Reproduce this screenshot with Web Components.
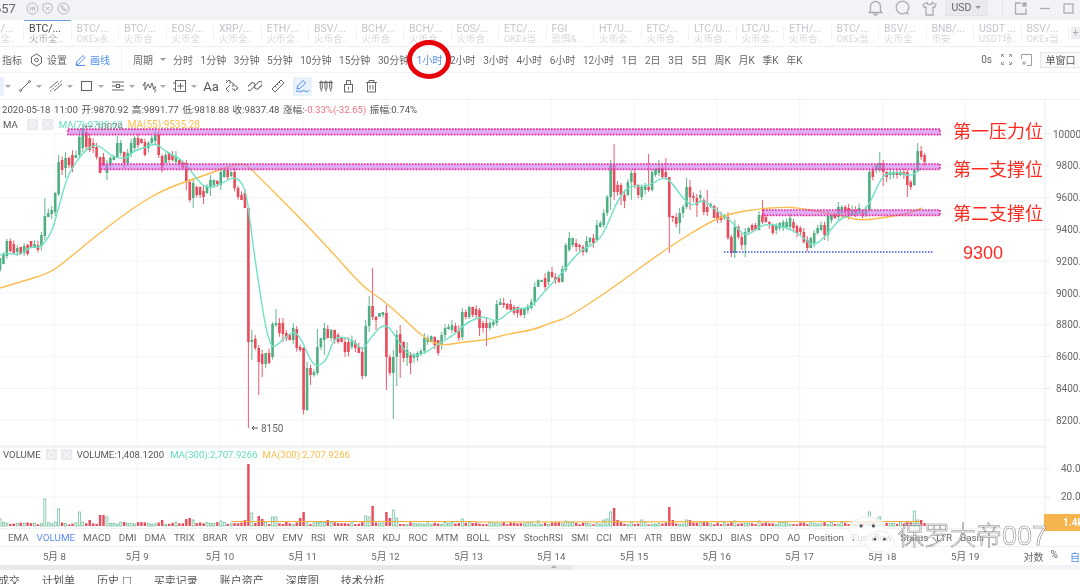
<!DOCTYPE html>
<html lang="zh">
<head>
<meta charset="utf-8">
<title>K线</title>
<style>
	html, body { margin: 0; background: #fff; }
	body {
		position: relative;
		width: 1080px;
		height: 584px;
		overflow: hidden;
		font-family: Roboto, "Noto Sans CJK SC", sans-serif;
		font-size: 10px;
		color: #666;
		filter: blur(.35px);
	}
</style>
</head>
<body>
<top-bar></top-bar>

<symbol-tabs>
	<symbol-tab sub="火币全..">BTC/...</symbol-tab>
	<symbol-tab sub="火币全.." active>BTC/...</symbol-tab>
	<symbol-tab sub="OKEx永..">BTC/...</symbol-tab>
	<symbol-tab sub="火币合..">BTC/...</symbol-tab>
	<symbol-tab sub="火币全..">EOS/...</symbol-tab>
	<symbol-tab sub="火币全..">XRP/...</symbol-tab>
	<symbol-tab sub="火币全..">ETH/...</symbol-tab>
	<symbol-tab sub="火币合..">BSV/...</symbol-tab>
	<symbol-tab sub="火币合..">BCH/...</symbol-tab>
	<symbol-tab sub="火币合..">BCH/...</symbol-tab>
	<symbol-tab sub="火币合..">EOS/...</symbol-tab>
	<symbol-tab sub="OKEx当..">ETC/...</symbol-tab>
	<symbol-tab sub="恐惧&..">FGI</symbol-tab>
	<symbol-tab sub="火币全..">HT/U...</symbol-tab>
	<symbol-tab sub="火币合..">ETC/...</symbol-tab>
	<symbol-tab sub="火币合..">LTC/U...</symbol-tab>
	<symbol-tab sub="火币全..">LTC/U...</symbol-tab>
	<symbol-tab sub="火币合..">ETH/...</symbol-tab>
	<symbol-tab sub="OKEx当..">BTC/...</symbol-tab>
	<symbol-tab sub="火币全..">BSV/...</symbol-tab>
	<symbol-tab sub="币安">BNB/...</symbol-tab>
	<symbol-tab sub="USDT场..">USDT ...</symbol-tab>
	<symbol-tab sub="OKEx当..">BSV/...</symbol-tab>
</symbol-tabs>

<period-bar>
	<period-btn>分时</period-btn>
	<period-btn>1分钟</period-btn>
	<period-btn>3分钟</period-btn>
	<period-btn>5分钟</period-btn>
	<period-btn>10分钟</period-btn>
	<period-btn>15分钟</period-btn>
	<period-btn>30分钟</period-btn>
	<period-btn active ringed>1小时</period-btn>
	<period-btn>2小时</period-btn>
	<period-btn>3小时</period-btn>
	<period-btn>4小时</period-btn>
	<period-btn>6小时</period-btn>
	<period-btn>12小时</period-btn>
	<period-btn>1日</period-btn>
	<period-btn>2日</period-btn>
	<period-btn>3日</period-btn>
	<period-btn>5日</period-btn>
	<period-btn>周K</period-btn>
	<period-btn>月K</period-btn>
	<period-btn>季K</period-btn>
	<period-btn>年K</period-btn>
</period-bar>

<draw-tools></draw-tools>

<kline-chart></kline-chart>

<indicator-row>
	<span>EMA</span><span class="on">VOLUME</span><span>MACD</span><span>DMI</span><span>DMA</span><span>TRIX</span><span>BRAR</span><span>VR</span><span>OBV</span><span>EMV</span><span>RSI</span><span>WR</span><span>SAR</span><span>KDJ</span><span>ROC</span><span>MTM</span><span>BOLL</span><span>PSY</span><span>StochRSI</span><span>SMI</span><span>CCI</span><span>MFI</span><span>ATR</span><span>BBW</span><span>SKDJ</span><span>BIAS</span><span>DPO</span><span>AO</span><span>Position</span><span>Fundflow</span><span>Status</span><span>LTR</span><span>Basis</span>
</indicator-row>

<date-row></date-row>
<scroll-strip></scroll-strip>

<bottom-tabs>
	<span>成交</span><span>计划单</span><span>历史 ☐</span><span>买卖记录</span><span>账户资产</span><span>深度图</span><span>技术分析</span>
</bottom-tabs>

<water-mark></water-mark>

<script>
class TopBar extends HTMLElement {
	constructor() {
		super();
		this.attachShadow({ mode: 'open' }).innerHTML = `
			<style>
				:host { display: flex; align-items: center; height: 20px; background: #f2f3f6; color: #666; box-sizing: border-box; padding-bottom: 4px; }
				.num { font-size: 13px; margin-left: -6px; margin-right: 8px; color: #666; }
				.left { display: flex; align-items: center; gap: 2px; }
				.right { display: flex; align-items: center; margin-left: auto; }
				svg { display: block; fill: none; stroke: #b4b7bd; stroke-width: 1; }
				.big { stroke: #a9adb4; stroke-width: 1.3; margin-right: 12px; }
				.usd { display: flex; align-items: center; justify-content: center; gap: 4px; box-sizing: border-box; width: 43px; height: 16px; margin: 0 14px 0 8px; background: #e8eaee; border-bottom: 1px solid #e0e3e8; color: #666; font-size: 10.5px; }
				.usd i { border: 3px solid transparent; border-top: 3.5px solid #999; border-bottom: 0; }
				.sep { width: 1px; height: 14px; background: #e4e6ea; margin-right: 11px; }
				.win { margin-right: 12px; }
			</style>
			<span class="left">
				<span class="num">657</span>
				<svg width="13" height="13" viewBox="0 0 13 13"><circle cx="6.5" cy="6.5" r="5.5"/><path d="M4.5 4.8v3.4M6.5 4.8v3.4M8.5 4.8v3.4" stroke-width="1.2"/></svg>
				<svg width="13" height="13" viewBox="0 0 13 13"><path d="M6.5 1l4.5 1.6v4c0 2.5-2 4.2-4.5 5.2C4 10.8 2 9.1 2 6.6v-4z"/><path d="M4.8 4.8l3.4 3.4M8.2 4.8l-3.4 3.4"/></svg>
				<svg width="13" height="13" viewBox="0 0 13 13" style="margin-left:1px"><circle cx="6.5" cy="6.5" r="5.5"/><path d="M4.3 3.8c-.5 2.5 2.2 5.2 4.6 4.7l.3-1-1.5-.7-.7.6c-.7-.4-1.2-1-1.5-1.7l.7-.6-.7-1.5z"/></svg>
			</span>
			<span class="right">
				<svg class="big" width="15" height="16" viewBox="0 0 15 16"><path d="M2.5 11V6.5a5 5 0 0 1 10 0V11l1.3 1.5H1.2zM5.5 12.5a2 2.5 0 0 0 4 0"/></svg>
				<svg class="big" width="15" height="16" viewBox="0 0 15 16"><circle cx="7.5" cy="7.5" r="6.3"/><path d="M11.5 12.5l2 2"/></svg>
				<svg class="big" style="margin-right:0" width="15" height="15" viewBox="0 0 15 15"><path d="M4.8 1.5L1 3.5l1.4 3 1.6-.6V14h7V5.9l1.6.6L14 3.5l-3.8-2c-.4 1.5-1.5 2.2-2.7 2.2S5.2 3 4.8 1.5z"/></svg>
				<span class="usd">USD<i></i></span>
				<span class="sep"></span>
				<svg class="big win" width="13" height="13" viewBox="0 0 13 13"><path d="M7 1H1.5v11H12V6.5"/><rect x="9" y="1" width="3" height="3" fill="#a9adb4"/></svg>
				<svg class="big win" style="stroke:#a9adb4" width="12" height="13" viewBox="0 0 12 13"><path d="M1 6.5h10"/></svg>
				<svg class="big win" style="margin-right:6px" width="11" height="11" viewBox="0 0 11 11"><rect x="1" y="1" width="9" height="9"/></svg>
			</span>
		`;
	}
}
customElements.define('top-bar', TopBar);

class SymbolTabs extends HTMLElement {
	constructor() {
		super();
		this.attachShadow({ mode: 'open' }).innerHTML = `
			<style>
				:host { display: flex; position: relative; height: 27px; box-sizing: border-box; border-bottom: 1px solid #f0f1f4; background: #fff; overflow: hidden; }
				.list { display: flex; margin-left: -23.5px; flex: none; }
				.add { position: absolute; right: 0; top: 7px; width: 9px; height: 12px; background: #eceef1; color: #aaa; font-size: 10px; line-height: 12px; text-align: center; }
			</style>
			<div class="list"><slot></slot></div>
			<span class="add">+</span>
		`;
	}
}
customElements.define('symbol-tabs', SymbolTabs);

class SymbolTab extends HTMLElement {
	constructor() {
		super();
		this.attachShadow({ mode: 'open' }).innerHTML = `
			<style>
				:host { display: block; position: relative; flex: none; box-sizing: border-box; width: 47.5px; height: 27px; padding: 3px 0 0 5px; white-space: nowrap; overflow: hidden; color: #c3c6cb; font-size: 10.5px; line-height: 11px; }
				:host::after { content: ""; position: absolute; right: 0; top: 6px; height: 14px; width: 1px; background: #f1f2f4; }
				:host([active]) { color: #444; }
				.sub { display: block; font-size: 9.5px; line-height: 9.5px; color: #d6d8dc; }
				:host([active]) .sub { color: #b0b2b6; }
				:host([active])::before { content: ""; position: absolute; left: 0; top: 0; width: 47px; height: 1px; background: #6d9ff0; }
			</style>
			<slot></slot><span class="sub"></span>
		`;
	}
	connectedCallback() {
		this.shadowRoot.querySelector('.sub').textContent = this.getAttribute('sub');
	}
}
customElements.define('symbol-tab', SymbolTab);

class PeriodBar extends HTMLElement {
	constructor() {
		super();
		this.attachShadow({ mode: 'open' }).innerHTML = `
			<style>
				:host { display: flex; align-items: center; height: 26px; background: #fff; color: #666; box-sizing: border-box; padding-left: 2px; border-bottom: 1px solid #f3f4f6; }
				svg { display: block; fill: none; flex: none; }
				.set { display: flex; align-items: center; padding-right: 11px; margin-right: 11px; height: 100%; border-right: 1px solid #f1f2f4; }
				.caret { width: 0; height: 0; border: 3px solid transparent; border-top: 3.5px solid #999; border-bottom: 0; margin: 0 7px 0 7px; }
				.items { display: flex; align-items: center; gap: 7.6px; }
				.right { display: flex; align-items: center; margin-left: auto; }
				.btn { box-sizing: border-box; width: 40px; height: 16px; line-height: 15px; border: 1px solid #e5e7ea; border-right: 0; background: #f8f9fa; text-align: center; color: #555; margin-left: 8px; }
				.blue { color: #4a8cf0; }
			</style>
			<span class="set">
				<span>指标</span>
				<svg style="margin:0 4px 0 8px" width="13" height="14" viewBox="0 0 13 14" stroke="#666"><path d="M6.5 1l5 3v6l-5 3-5-3V4z"/><circle cx="6.5" cy="7" r="1.8"/></svg>
				<span>设置</span>
				<svg style="margin:0 4px 0 8px" width="11" height="12" viewBox="0 0 11 12" stroke="#4a8cf0"><path d="M1 11l.7-3L8 1.5 10 3.5 3.6 10zM1 11.500h9"/></svg>
				<span class="blue">画线</span>
			</span>
			<span>周期</span><span class="caret"></span>
			<span class="items"><slot></slot></span>
			<span class="right">
				<span>0s</span>
				<svg style="margin-left:9px" width="11" height="11" viewBox="0 0 11 11" stroke="#9a9da3"><path d="M.5 3V.5H3M8 .5h2.5V3M10.5 8v2.5H8M3 10.5H.5V8M1 1l2 2M10 1L8 3M10 10L8 8M1 10l2-2"/></svg>
				<svg style="margin-left:9px" width="11" height="12" viewBox="0 0 11 12" stroke="#9a9da3"><path d="M.5 5V.5h10v11H6M1 9h4M3 7v4"/></svg>
				<span class="btn">单窗口</span>
			</span>
		`;
	}
}
customElements.define('period-bar', PeriodBar);

class PeriodBtn extends HTMLElement {
	constructor() {
		super();
		this.attachShadow({ mode: 'open' }).innerHTML = `
			<style>
				:host { display: block; position: relative; white-space: nowrap; color: #666; }
				:host([active]) { color: #5b8def; }
				.ring { display: none; position: absolute; left: 50%; top: 50%; width: 34px; height: 29px; margin: -20px 0 0 -22.5px; border: 5.5px solid #e8000b; border-radius: 50%; z-index: 2; }
				:host([ringed]) .ring { display: block; }
			</style>
			<slot></slot><span class="ring"></span>
		`;
	}
}
customElements.define('period-btn', PeriodBtn);

class DrawTools extends HTMLElement {
	constructor() {
		super();
		const group = (icon) => `<span class="group"><span class="ic">${icon}</span><i></i></span>`;
		const cell = (icon, cls) => `<span class="cell ${cls || ''}">${icon}</span>`;
		this.attachShadow({ mode: 'open' }).innerHTML = `
			<style>
				:host { display: flex; align-items: center; height: 27px; box-sizing: border-box; margin-left: -16px; border-bottom: 1px solid #f0f1f4; background: #fff; color: #555; }
				svg { display: block; fill: none; stroke: #666; stroke-width: 1; }
				.group { display: flex; align-items: center; width: 31px; flex: none; }
				.ic { display: flex; justify-content: center; width: 20px; }
				i { border: 3px solid transparent; border-top: 3.5px solid #aaa; border-bottom: 0; margin-left: 1px; }
				.cell { display: flex; align-items: center; justify-content: center; width: 22.8px; height: 19px; flex: none; }
				.aa { font-size: 13px; color: #555; width: 20px; }
				.on { background: #e8f2fd; width: 19px; margin: 0 2px 0 4px; }
				.on svg { stroke: #4a8cf0; }
				.first { background: linear-gradient(90deg, #e8f2fd 20px, transparent 20px); height: 19px; }
			</style>
			<span class="group first"><span class="ic"><svg width="14" height="14" viewBox="0 0 14 14"><path d="M2 12L12 2" stroke="#4a8cf0"/></svg></span><i></i></span>
			${group('<svg width="14" height="14" viewBox="0 0 14 14"><path d="M3 11l8-8"/><circle cx="2.5" cy="11.5" r="1"/><circle cx="11.5" cy="2.5" r="1"/></svg>')}
			${group('<svg width="14" height="14" viewBox="0 0 14 14"><path d="M1 9l8-7M5 12l8-7"/><path d="M1 12.5L13 1.5" stroke-dasharray="2 1.5"/></svg>')}
			${group('<svg width="14" height="14" viewBox="0 0 14 14"><rect x="1.5" y="2.5" width="10" height="9" stroke-width="1.1"/></svg>')}
			${group('<svg width="14" height="14" viewBox="0 0 14 14"><path d="M1 3h12M1 11h12M1 7h4M9 7h4"/><rect x="5.5" y="5.5" width="3" height="3"/></svg>')}
			${group('<svg width="15" height="14" viewBox="0 0 15 14"><path d="M1 7l2-4v8M3 11l3-6 2 4 2-5 2 7M12 8h2l-1.5 2 1.5 1.5L12 13"/></svg>')}
			${group('<svg width="14" height="14" viewBox="0 0 14 14"><rect x="2.5" y="1.5" width="10" height="11"/><path d="M7.5 4v6M4.5 7h6M0 4h2.5M0 10h2.5"/></svg>')}
			${cell('Aa', 'aa')}
			${cell('<svg width="14" height="14" viewBox="0 0 14 14"><path d="M1 4l3-3 9 8-3 3-3-2.5M4 13l-3-3 4-4M5 2v3M8 5v3"/><path d="M1 1.5h4M9 10h4" stroke-dasharray="1 1"/></svg>')}
			${cell('<svg width="14" height="14" viewBox="0 0 14 14"><rect x="-1.5" y="5.3" width="9" height="4.5" rx="2.2" transform="rotate(-45 3 7.5)"/><rect x="6" y="4" width="9" height="4.5" rx="2.2" transform="rotate(-45 10.5 6.2)"/></svg>')}
			${cell('<svg width="14" height="14" viewBox="0 0 14 14"><path d="M1 10L10 1l3 3-9 9zM4 7l1.5 1.5M6 5l1.5 1.5M8 3l1.5 1.5"/></svg>')}
			${cell('<svg width="15" height="14" viewBox="0 0 15 14"><path d="M2 10l.5-3L8 1.5 10.5 4 5 9.5zM1 12.5c2-1.5 3 .8 5 0s2.5-1.5 4-.5 2 .8 4-.5"/></svg>', 'on')}
			${cell('<svg width="14" height="14" viewBox="0 0 14 14"><path d="M0 3.5h14"/><rect x="1.3" y="2" width="2" height="8" rx="1"/><rect x="6" y="2" width="2" height="8" rx="1"/><rect x="10.7" y="2" width="2" height="8" rx="1"/><path d="M2.3 10v2.5M7 10v2.5M11.7 10v2.5"/></svg>')}
			${cell('<svg width="13" height="14" viewBox="0 0 13 14"><rect x="2.5" y="5.5" width="8" height="7.5"/><path d="M4.5 5.5V1.5h4v4M6.5 8v2.5"/></svg>')}
			${cell('<svg width="13" height="14" viewBox="0 0 13 14"><path d="M1 3.5h11M4 3.5V1.5h5v2M2.5 3.5V13h8V3.5M5 6v4.5M8 6v4.5"/></svg>')}
		`;
	}
}
customElements.define('draw-tools', DrawTools);

/* candles are read off the picture: top and bottom of the body in page pixels, g or r */
const CANDLES = `g258,270 g254,264 g241,256 r241,251 r244,253 g248,252 r247,254 g246,253 r245,254 r241,247 g244,248 r245,250
g235,246 g216,236 g213,217 g210,214 g193,212 g162,194 r160,170 g158,168 r158,165 r155,168 g155,158 g137,155 g128,148 r132,147 r138,150 r143,148
r147,157 r157,173 r157,166 g165,173 g158,165 g157,160 g143,157 g143,153 r152,163 g153,163 g143,154 g138,148 r138,145 r139,143 r142,155 g143,148
g138,143 g135,141 r135,155 r156,168 g155,163 r153,160 r155,160 g156,162 r160,164 r162,168 r163,182 r182,200 g183,198 r187,195 r187,195 r191,197
g187,193 g180,188 g180,185 r181,184 g172,185 g170,177 r170,177 g172,176 r172,188 r188,197 r195,200 r193,208 r208,342 g340,342 r339,348 r348,362
r354,364 g353,364 r353,363 g324,357 g323,325 r323,333 r323,334 r333,338 r335,340 g328,340 r329,348 r347,350 r348,410 g368,410 r368,375 g372,375
g347,373 g338,347 g328,340 r329,338 g330,338 r330,340 r335,342 r338,342 r342,352 r342,352 g340,347 r343,348 r347,353 r352,376 g326,376 g306,326
r306,317 r317,320 g313,317 g312,315 r313,357 r357,373 g357,373 g335,357 r334,353 r342,358 g350,358 r355,363 g355,358 g353,357 g351,354 g338,351
g338,342 g336,342 r337,345 r340,353 g335,345 g328,335 g327,329 g325,330 r326,332 r330,338 g312,337 r312,317 g307,317 r307,315 r309,315 r310,328
r323,328 r323,328 g323,328 g322,325 g304,323 g302,305 r303,305 r304,309 r304,310 r307,313 r307,313 r308,315 g308,315 g306,310 g302,308 g287,302
g280,287 g280,282 r278,287 g272,282 r272,277 r277,280 r278,282 g269,282 g245,270 g238,250 g238,245 r243,247 r245,247 r247,252 g241,252 g238,242
r238,243 g225,240 g223,227 g213,225 g197,213 g165,197 r165,192 r185,192 r185,195 r195,201 g182,195 g173,182 r173,185 r185,195 g187,197 g186,190
r187,190 g172,190 g170,175 g168,173 r168,177 r172,177 r177,217 r216,218 r217,224 g213,223 g207,213 g187,207 r187,197 r196,198 r198,205 g195,198
r200,212 r207,212 g204,207 r206,218 r212,220 r216,220 g215,218 r217,238 r237,253 g227,253 r227,237 r237,245 g232,245 g228,232 r225,230 r225,230
g215,230 r215,222 r217,222 r222,225 r225,233 g225,230 g223,228 g222,228 g222,227 g218,227 r222,228 r226,233 r228,232 r232,242 r240,248 g238,248
g233,243 g228,233 g225,230 r225,235 g216,235 g215,220 r215,218 g207,217 g207,213 r207,213 r208,215 g210,215 r210,215 g208,213 r210,215 g210,215
g172,210 r170,177 g165,170 g163,170 r163,172 r172,177 g172,175 g172,175 r172,175 g172,175 r172,175 r172,185 r182,187 g170,185 g151,170 r151,157 r155,162`
	.trim().split(/\s+/).map(s => ({ red: s[0] === 'r', top: +s.slice(1).split(',')[0], bot: +s.slice(1).split(',')[1] }));

// the long wicks, by candle index
const WICKS = {
	13: [198, 240], 17: [155, 196], 19: [152, 178], 23: [130, 157], 24: [124, 152], 31: [160, 180], 34: [136, 158],
	46: [130, 158], 54: [160, 190], 56: [178, 208], 59: [186, 204], 61: [175, 196], 64: [168, 190],
	72: [208, 428], 73: [330, 360], 75: [345, 395], 76: [350, 377], 80: [309, 327], 82: [318, 342], 89: [362, 411], 90: [365, 385],
	92: [329, 375], 94: [323, 355], 108: [268, 320], 106: [320, 377], 107: [296, 332], 109: [316, 330],
	112: [305, 390], 114: [350, 419], 115: [330, 386], 116: [325, 378], 118: [342, 366], 119: [352, 374],
	134: [308, 340], 139: [308, 336], 141: [318, 346], 144: [300, 326], 146: [298, 308],
	164: [243, 272], 165: [232, 252], 177: [160, 210], 178: [144, 200], 180: [183, 205], 181: [190, 208], 183: [170, 200], 188: [154, 192],
	191: [160, 176], 193: [158, 180], 194: [177, 253], 197: [208, 234], 199: [178, 209], 200: [180, 210], 202: [194, 217], 205: [190, 216],
	211: [212, 240], 212: [235, 257], 213: [220, 258], 216: [228, 257], 221: [200, 224], 240: [210, 241], 243: [202, 220],
	252: [170, 212], 255: [152, 172], 256: [160, 186], 263: [170, 197], 264: [180, 190], 266: [143, 172], 267: [146, 160], 268: [153, 166]
};

const VOLUMES = {
	0: 7, 13: 27, 17: 17, 23: 14, 26: 6, 29: 11, 30: 11, 31: 9, 47: 6, 54: 7, 55: 8, 56: 6, 64: 5, 71: 6, 72: 62, 73: 13, 75: 10, 76: 7, 79: 9, 80: 9,
	87: 8, 88: 14, 95: 6, 106: 10, 107: 9, 108: 20, 112: 14, 113: 8, 114: 16, 115: 8, 134: 7, 156: 5, 164: 5, 175: 6, 176: 7, 177: 14, 178: 18, 179: 6,
	186: 6, 194: 19, 195: 6, 199: 6, 200: 6, 213: 5, 220: 5, 252: 14, 254: 7, 255: 9, 265: 15, 266: 6, 267: 6
};

const MA7 = [[0,255],[7,253],[20,255],[30,247],[37,247],[42,246],[52,232],[58,210],[67,177],[77,160],[88,148],[97,144],[107,152],[115,158],[128,158],[132,152],[143,148],[157,143],[163,150],[177,157],[185,163],[200,183],[207,188],[220,185],[232,177],[240,180],[246,192],[250,220],[255,260],[269,350],[280,343],[293,330],[302,340],[310,360],[317,367],[327,360],[333,340],[342,336],[355,342],[363,351],[370,338],[385,322],[397,338],[407,355],[422,355],[437,345],[457,333],[463,325],[483,315],[497,323],[513,308],[530,309],[543,293],[562,273],[580,250],[597,243],[607,227],[615,205],[628,185],[647,187],[663,177],[670,180],[690,208],[703,199],[713,208],[730,220],[737,228],[747,237],[763,223],[787,227],[803,237],[813,247],[827,235],[840,218],[853,215],[867,210],[880,180],[887,173],[900,172],[910,177],[922,168]];
const MA55 = [[0,288],[20,282],[50,273],[67,260],[97,235],[137,205],[167,188],[200,177],[227,167],[243,163],[250,168],[297,215],[333,253],[363,287],[383,300],[403,318],[423,337],[440,346],[463,342],[487,340],[507,334],[533,330],[553,322],[567,318],[610,290],[667,248],[713,220],[733,213],[757,209],[783,207],[800,208],[820,212],[840,215],[860,221],[887,217],[907,214],[922,208]];

// rounds the corners of a polyline: each knot is the control point between two midpoints
const smooth = a => {
	let d = `M${a[0][0]} ${a[0][1]}`;
	for (let i = 1; i < a.length - 1; i++) {
		const mx = (a[i][0] + a[i + 1][0]) / 2, my = (a[i][1] + a[i + 1][1]) / 2;
		d += `Q${a[i][0]} ${a[i][1]} ${mx} ${my}`;
	}
	const last = a[a.length - 1];
	return d + `L${last[0]} ${last[1]}`;
};

class KlineChart extends HTMLElement {
	constructor() {
		super();
		let seed = 11;
		const rnd = () => (seed = seed * 16807 % 2147483647) / 2147483647;
		const GREEN = '#4fae82', RED = '#e94b5b';
		const STEP = 3.45;

		let grid = '', axis = '';
		for (let i = 0; i < 12; i++) {
			const x = 54.5 + i * 82.8;
			grid += `<path d="M${x} 100V528" class="grid"/>`;
		}
		for (let p = 10000; p >= 8200; p -= 200) {
			const y = 134 + (10000 - p) * 0.159;
			grid += `<path d="M0 ${y}H1045" class="grid"/><path d="M1045 ${y}h5" class="tick"/>`;
			axis += `<text x="${p === 10000 ? 1053 : 1056}" y="${y + 3.5}">${p}.00</text>`;
		}
		[[469, '40.00K'], [497, '20.00K']].forEach(([y, t]) => {
			grid += `<path d="M0 ${y}H1045" class="grid"/><path d="M1045 ${y}h5" class="tick"/>`;
			axis += `<text x="1061" y="${y + 3}">${t}</text>`;
		});

		let wicks = '', bodies = '', vols = '';
		CANDLES.forEach((c, i) => {
			const x = +(i * STEP).toFixed(2);
			const col = c.red ? RED : GREEN;
			const w = WICKS[i] || [c.top - rnd() * 5, c.bot + rnd() * 5];
			wicks += `<path d="M${x} ${w[0].toFixed(1)}V${w[1].toFixed(1)}" stroke="${col}"/>`;
			bodies += `<rect x="${x - 1.3}" y="${c.top}" width="2.6" height="${Math.max(c.bot - c.top, 1)}" fill="${col}"/>`;
			const h = VOLUMES[i] || 1.5 + rnd() * 2.5;
			const top = (526 - h).toFixed(1);
			vols += c.red
				? `<rect x="${x - 1.2}" y="${top}" width="2.4" height="${h.toFixed(1)}" fill="${RED}"/>`
				: `<rect x="${x - 1}" y="${top}" width="2" height="${h.toFixed(1)}" fill="#fff" stroke="#6fc09c" stroke-width=".8"/>`;
		});

		const zone = (x, y, w) => `<rect x="${x}" y="${y}" width="${w}" height="5.4" class="zone"/>`;

		this.attachShadow({ mode: 'open' }).innerHTML = `
			<style>
				:host { display: block; position: relative; height: 428px; background: #fff; }
				svg { display: block; }
				.grid { stroke: #f2f5fa; stroke-width: 1; fill: none; }
				.tick { stroke: #e4e8ee; stroke-width: 1; fill: none; }
				.zone { fill: rgba(205, 120, 235, .6); stroke: #f0259a; stroke-width: 1.7; stroke-dasharray: 1.7 1.3; }
				text { font-family: Roboto, sans-serif; font-size: 10px; fill: #666; }
				.legend { position: absolute; left: 3px; display: flex; align-items: center; white-space: nowrap; font-size: 9.6px; color: #555; }
				.box { display: block; width: 11px; height: 11px; background: #e9ebef; margin-left: 4px; }
				.box svg { stroke: #fff; fill: none; }
				.teal { color: #5fdcbc; }
				.gold { color: #fbbd4a; }
				.red { color: #f0717e; }
				.info { position: absolute; left: 2px; top: 2px; white-space: nowrap; color: #555; font-size: 9.6px; word-spacing: 1.2px; }
				.tag { position: absolute; color: #ff2a1f; font-size: 18px; line-height: 22px; white-space: nowrap; font-family: "Noto Sans CJK SC", sans-serif; font-weight: 400; }
				.last { position: absolute; left: 1044px; top: 414px; width: 36px; height: 17px; background: #f6b44f; color: #fff; font-weight: 700; line-height: 17px; padding-left: 19px; box-sizing: border-box; white-space: nowrap; overflow: hidden; }
			</style>
			<svg width="1080" height="428" viewBox="0 100 1080 428">
				<g>${grid}</g>
				<path d="M0 446.5H1045" stroke="#eef0f4" stroke-width="2"/>
				<path d="M1045 100V528" stroke="#e8ecf2"/>
				<g>${vols}</g>
				<polyline points="231,521.5 475,521.5 478,522 920,521.5" fill="none" stroke="#f5b03c" stroke-width="1.1"/>
				<g stroke-width=".9" fill="none">${wicks}</g>
				<g>${bodies}</g>
				<path d="${smooth(MA55)}" fill="none" stroke="#fdbc4e" stroke-width="1.4"/>
				<path d="${smooth(MA7)}" fill="none" stroke="#72e2c6" stroke-width="1.4"/>
				${zone(68, 129.2, 872)}
				${zone(100, 164, 840)}
				${zone(763, 210, 177)}
				<path d="M724 252H934" stroke="#3f51d8" stroke-width="1.6" stroke-dasharray="1.5 1.5" fill="none"/>
				<path d="M258 428h-6m2-2l-2 2 2 2" stroke="#555" fill="none"/>
				<text x="261" y="431.5">8150</text>
				<g>${axis}</g>
			</svg>
			<span class="info">2020-05-18 11:00 开:9870.92 高:9891.77 低:9818.88 收:9837.48 涨幅:<span class="red">-0.33%(-32.65)</span> 振幅:0.74%</span>
			<span class="legend" style="top:19px">MA
				<span class="box" style="margin-left:9px"><svg width="11" height="11" viewBox="0 0 12 12"><circle cx="6" cy="6" r="3"/></svg></span>
				<span class="box"><svg width="11" height="11" viewBox="0 0 12 12"><path d="M2.5 2.5l7 7M9.5 2.5l-7 7"/></svg></span>
				<span class="teal" style="margin-left:6px;width:69px">MA(7):9788.62</span>
				<span class="gold" style="font-size:10px">MA(55):9535.28</span>
			</span>
			<span class="legend" style="top:19px;left:84px;color:#888">← 10079</span>
			<span class="legend" style="top:349px;gap:0">VOLUME
				<span class="box" style="margin-left:5px"><svg width="11" height="11" viewBox="0 0 12 12"><circle cx="6" cy="6" r="3"/></svg></span>
				<span class="box"><svg width="11" height="11" viewBox="0 0 12 12"><path d="M2.5 2.5l7 7M9.5 2.5l-7 7"/></svg></span>
				<span style="margin-left:5px">VOLUME:1,408.1200</span>
				<span class="teal" style="margin-left:6px">MA(300):2,707.9266</span>
				<span class="gold" style="margin-left:5px">MA(300):2,707.9266</span>
			</span>
			<span class="tag" style="left:953px;top:19px">第一压力位</span>
			<span class="tag" style="left:953px;top:57px">第一支撑位</span>
			<span class="tag" style="left:953px;top:101px">第二支撑位</span>
			<span class="tag" style="left:963px;top:142px;font-family:'Liberation Sans',sans-serif">9300</span>
			<span class="last">1.4k</span>
		`;
	}
}
customElements.define('kline-chart', KlineChart);

class IndicatorRow extends HTMLElement {
	constructor() {
		super();
		this.attachShadow({ mode: 'open' }).innerHTML = `
			<style>
				:host { display: flex; align-items: center; gap: 8px; box-sizing: border-box; height: 19px; padding-left: 8px; border-top: 1px solid #eef0f4; border-bottom: 1px solid #eef0f4; white-space: nowrap; color: #666; font-size: 9.8px; overflow: hidden; }
				::slotted(.on) { color: #5b8def; }
			</style>
			<slot></slot>
		`;
	}
}
customElements.define('indicator-row', IndicatorRow);

class DateRow extends HTMLElement {
	constructor() {
		super();
		const days = [8, 9, 10, 11, 12, 13, 14, 15, 16, 17, 18, 19]
			.map(d => `<span class="d">5月 ${d}</span>`).join('');
		this.attachShadow({ mode: 'open' }).innerHTML = `
			<style>
				:host { display: flex; align-items: center; height: 18px; padding-left: 13px; white-space: nowrap; overflow: hidden; color: #666; font-size: 9.7px; }
				.d { flex: none; width: 82.8px; text-align: center; }
				.r { display: flex; flex: none; gap: 7px; margin-left: 17px; font-size: 10px; }
				.a { color: #4a8cf0; margin-left: 5px; }
			</style>
			${days}
			<span class="r"><span>对数</span><span>%</span><span class="a">自动</span></span>
		`;
	}
}
customElements.define('date-row', DateRow);

class ScrollStrip extends HTMLElement {
	constructor() {
		super();
		this.attachShadow({ mode: 'open' }).innerHTML = `
			<style>
				:host { display: block; height: 5px; background: #f1f3f7; position: relative; }
				.h { position: absolute; left: 0; top: 0; width: 572px; height: 5px; background: #e6e8ec; }
				.t { position: absolute; left: 551px; top: 0; border: 3px solid transparent; border-bottom: 3px solid #aeb2b8; border-top: 0; }
			</style>
			<span class="h"></span><span class="t"></span>
		`;
	}
}
customElements.define('scroll-strip', ScrollStrip);

class BottomTabs extends HTMLElement {
	constructor() {
		super();
		this.attachShadow({ mode: 'open' }).innerHTML = `
			<style>
				:host { display: flex; gap: 22px; height: 14px; margin-left: -2px; white-space: nowrap; overflow: hidden; color: #555; font-size: 11px; line-height: 24px; }
			</style>
			<slot></slot>
		`;
	}
}
customElements.define('bottom-tabs', BottomTabs);

class WaterMark extends HTMLElement {
	constructor() {
		super();
		this.attachShadow({ mode: 'open' }).innerHTML = `
			<style>
				:host { position: absolute; left: 846px; top: 515px; display: flex; align-items: center; pointer-events: none; }
				svg { display: block; }
				.t { font-family: "Noto Sans CJK SC", sans-serif; font-size: 26px; line-height: 38px; white-space: nowrap; color: rgba(255, 255, 255, .72); -webkit-text-stroke: .5px #7c7c7c; font-weight: 300; }
				.n { font-family: "Liberation Sans", sans-serif; font-size: 27px; letter-spacing: 0; }
			</style>
			<svg width="52" height="40" viewBox="0 0 52 42" fill="rgba(255,255,255,.75)" stroke="#f4f4f4" stroke-width="1.6">
				<path d="M21 2c10 0 19 6 19 14 0 1 0 2-.5 2.5C33 16 25 19 25 27c0 1 0 2 .5 3-2 .5-3 .5-5 .2L13 34l1.500-5C7 26 2 22 2 16 2 8 10.5 2 21 2z"/>
				<path d="M34 17c8 0 15 5 15 12 0 3.5-2 6.5-5 8.500l1 4-5-2.500c-2 .5-4 .5-6 .5-8 0-15-5-15-11s7-11.500 15-11.500z"/>
				<circle cx="14.5" cy="11.5" r="1.7" fill="#555" stroke="none"/><circle cx="27.5" cy="11.5" r="1.7" fill="#555" stroke="none"/>
				<circle cx="29" cy="25.5" r="1.5" fill="#555" stroke="none"/><circle cx="39" cy="25.5" r="1.5" fill="#555" stroke="none"/>
			</svg>
			<span class="t">保罗大帝<span class="n">007</span></span>
		`;
	}
}
customElements.define('water-mark', WaterMark);
</script>
</body>
</html>
